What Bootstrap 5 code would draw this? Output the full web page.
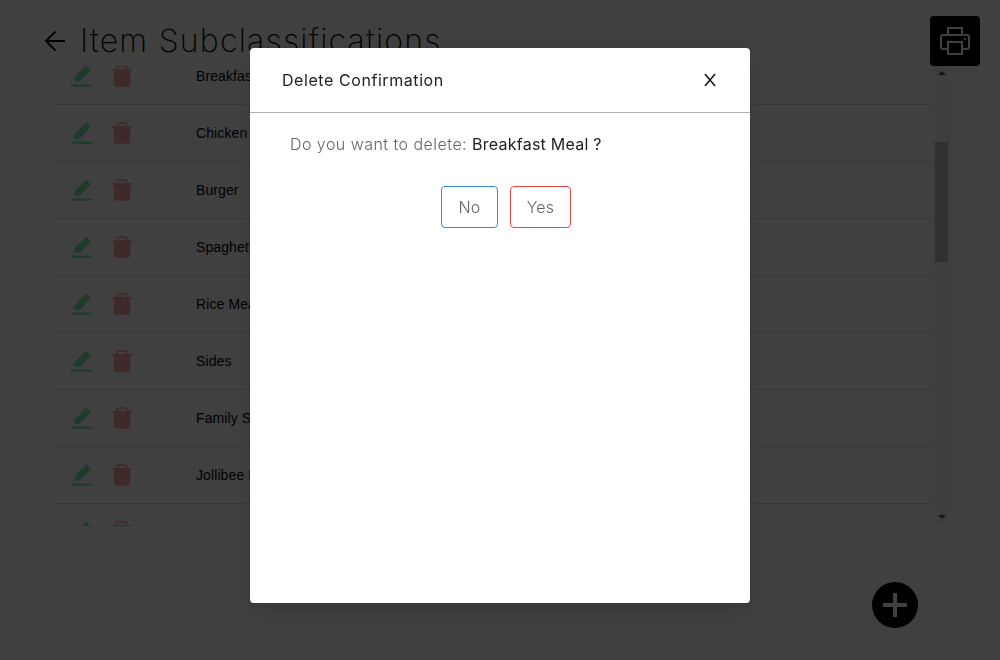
<!DOCTYPE html>
<html lang="en">
<head>
<meta charset="utf-8">
<meta name="viewport" content="width=device-width, initial-scale=1">
<title>Item Subclassifications</title>
<link href="https://cdn.jsdelivr.net/npm/bootstrap@5.3.0/dist/css/bootstrap.min.css" rel="stylesheet">
<style>
body{height:660px;overflow:hidden;background:#fff;color:#000;font-family:Inter,"Open Sans",sans-serif}
.page-head{height:66px;padding:16px 20px 0 43px}
.page-title{font-size:32px;font-weight:200;line-height:50px;letter-spacing:1.23px;margin:0 0 0 13px;white-space:nowrap}
.print-btn{width:50px;height:50px;background:#000;border:0;border-radius:4px;padding:0}
.list-area{height:460px;margin:0 50px}
.rows{margin-top:-18px;font:14px/20px "Liberation Sans",Arial,sans-serif;letter-spacing:.1px}
.item-row{height:57px;border-bottom:1px solid #e0e0e0;padding-left:21px}
.item-name{margin-left:64px}
.edit-icon{color:#78e8a4}
.trash-icon{color:#fca4a4;margin-left:19px}
.scroll-track{width:17px;background:#f6f6f6;padding:5px 0 7px}
.scroll-thumb{width:13px;height:120px;background:#c4c4c4;margin-top:67px}
.add-btn{width:46px;height:46px;background:#000;border:0;margin:56px 82px 0 auto;padding:0}
.modal-backdrop{--bs-backdrop-opacity:.75}
.modal-dialog{width:500px;max-width:500px;margin:48px auto 0}
.modal-content{height:555px;border:0;border-radius:4px;box-shadow:0 6px 16px rgba(0,0,0,.15)}
.modal-header{height:65px;padding:0 32px;border-bottom:1px solid #b0b0b0}
.modal-title{font-size:16px;font-weight:400;color:#222;letter-spacing:.57px;line-height:22px;padding-bottom:1px}
.close-btn{width:16px;height:20px;padding:0;border:0;background:none;line-height:1}
.modal-body{padding:19px 40px}
.question{font-size:16px;line-height:24px;font-weight:300;color:#666;margin:0;white-space:nowrap;letter-spacing:.46px}
.question strong{font-weight:400;color:#222;letter-spacing:.24px}
.choices{gap:12px;margin:30px 0 0 12px}
.choice{height:42px;padding:0;border-radius:4px;font-size:16px;font-weight:300;color:#666;letter-spacing:.2px}
.choice-no{width:57px;border-color:#3989e8}
.choice-yes{width:61px;border-color:#ef4444}
</style>
</head>
<body class="modal-open">
<svg class="d-none">
<symbol id="edit" viewBox="0 0 22 22"><path fill="currentColor" d="M3.2 16.7 3.8 12 14.4 1.2Q15.2.5 16 1.3L19.3 4.5Q20 5.2 19.3 5.9L8.7 16.7ZM.9 19.5H20.8Q21.4 19.5 21.4 20.6T20.8 21.7H.9Q.3 21.7.3 20.6T.9 19.5Z"/></symbol>
<symbol id="trash" viewBox="0 0 20 22"><path fill="none" stroke="currentColor" stroke-width="1.7" d="M5 4V2.8Q5 1.2 6.6 1.2H13.4Q15 1.2 15 2.8V4"/><path fill="currentColor" d="M.7 4H19.3Q20 4 20 4.9T19.3 5.8H18.2V19.3Q18.2 21.8 15.7 21.8H4.5Q2 21.8 2 19.3V5.8H.7Q0 5.8 0 4.9T.7 4Z"/></symbol>
</svg>
<header class="page-head d-flex align-items-center">
<svg width="24" height="24" viewBox="0 0 24 24" fill="none" stroke="#000" stroke-width="1.9"><path d="M22 12H3M12.5 2.5 3 12l9.5 9.5"/></svg>
<h1 class="page-title">Item Subclassifications</h1>
<button class="print-btn ms-auto" aria-label="Print"><svg class="d-block mx-auto" width="32" height="32" viewBox="0 0 32 32" fill="none" stroke="#fff" stroke-width="2"><path d="M9 24H4Q2 24 2 22V12Q2 10 4 10H28Q30 10 30 12V22Q30 24 28 24H23M9 10V3H23V10M9 17H23V29H9Z"/><circle cx="26" cy="14" r="1.1" fill="#fff" stroke="none"/></svg></button>
</header>
<main>
<div class="list-area d-flex overflow-hidden">
<div class="rows flex-grow-1" id="rows"></div>
<div class="scroll-track d-flex flex-column align-items-center">
<svg width="8" height="4" viewBox="0 0 8 4"><path fill="#505050" d="M0 4 4 0l4 4z"/></svg>
<div class="scroll-thumb"></div>
<svg class="mt-auto" width="8" height="4" viewBox="0 0 8 4"><path fill="#505050" d="M0 0h8L4 4z"/></svg>
</div>
</div>
<button class="add-btn rounded-circle d-flex align-items-center justify-content-center" aria-label="Add"><svg width="24" height="24" stroke="#fff" stroke-width="4"><path d="M12 0v24M0 12h24"/></svg></button>
</main>
<div class="modal d-block" tabindex="-1" role="dialog" aria-modal="true">
<div class="modal-dialog">
<div class="modal-content">
<div class="modal-header">
<h2 class="modal-title">Delete Confirmation</h2>
<button class="close-btn d-flex align-items-center justify-content-center" aria-label="Close"><svg width="12" height="14" fill="none" stroke="#111" stroke-width="1.5"><path d="M1 1l10 12M11 1L1 13"/></svg></button>
</div>
<div class="modal-body">
<p class="question">Do you want to delete: <strong>Breakfast Meal ?</strong></p>
<div class="choices d-flex justify-content-center">
<button class="btn choice choice-no">No</button>
<button class="btn choice choice-yes">Yes</button>
</div>
</div>
</div>
</div>
</div>
<div class="modal-backdrop show"></div>
<script src="https://cdn.jsdelivr.net/npm/bootstrap@5.3.0/dist/js/bootstrap.bundle.min.js"></script>
<script>
const items=["Breakfast Meal","Chicken","Burger","Spaghetti","Rice Meal","Sides","Family Set","Jollibee Meal",""];
document.getElementById("rows").innerHTML=items.map(n=>`<div class="item-row d-flex align-items-center"><svg class="edit-icon" width="22" height="22"><use href="#edit"/></svg><svg class="trash-icon" width="20" height="22"><use href="#trash"/></svg><span class="item-name">${n}</span></div>`).join("");
</script>
</body>
</html>
